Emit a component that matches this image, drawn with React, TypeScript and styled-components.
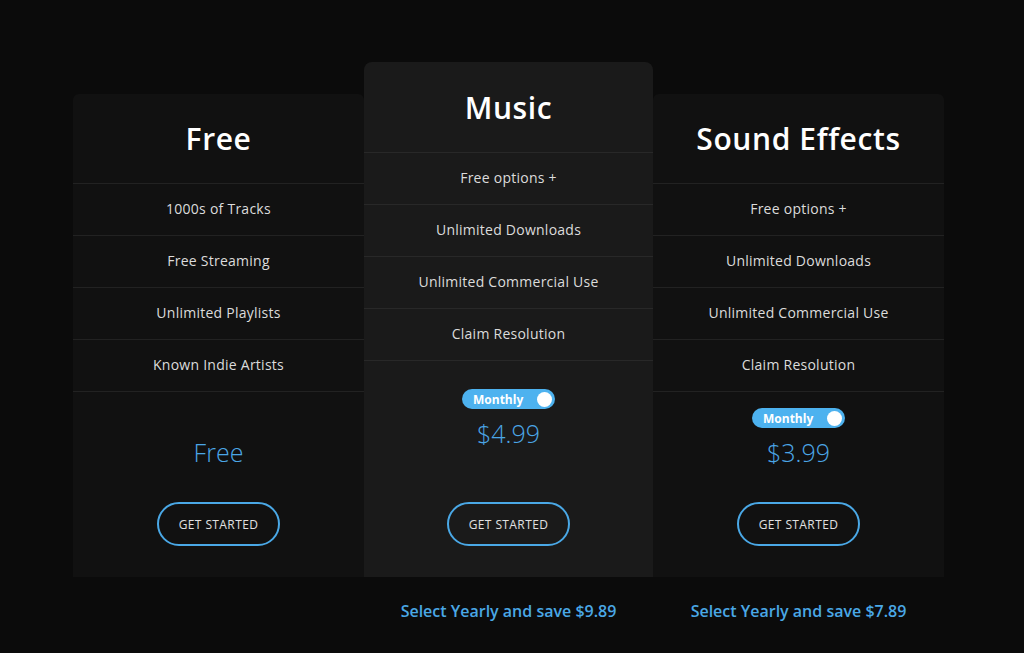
import React from 'react';
import styled, {createGlobalStyle} from 'styled-components';

const GlobalStyle = createGlobalStyle`
  html, body {
    margin: 0;
    padding: 0;
    background: #0b0b0b;
  }
  body {
    font-family: "Open Sans", "DejaVu Sans", sans-serif;
    color: #e6e6e6;
  }
`

const Page = styled.div`
  width: 1024px;
  height: 653px;
  padding: 62px 80px 0 73px;
  box-sizing: border-box;
  background: #0b0b0b;`
const Plans = styled.div`
  display: grid;
  grid-template-columns: 291px 289px 291px;
  align-items: end;`
const Card = styled.div<{$featured?: boolean}>`
  display: flex;
  flex-direction: column;
  height: ${p => p.$featured ? 515 : 483}px;
  background: ${p => p.$featured ? '#1a1a1a' : '#111111'};
  border-radius: ${p => p.$featured ? '8px 8px 0 0' : '6px 6px 0 0'};`
const Header = styled.div<{$featured?: boolean}>`
  height: ${p => p.$featured ? 90 : 89}px;
  display: flex;
  align-items: center;
  justify-content: center;`
const Title = styled.h2`
  margin: 0;
  font-weight: 600;
  font-size: 30px;
  letter-spacing: 0.6px;
  color: #fff;`
const Feature = styled.div<{$featured?: boolean}>`
  height: 52px;
  box-sizing: border-box;
  padding-bottom: 2px;
  border-top: 1px solid ${p => p.$featured ? '#282828' : '#222'};
  display: flex;
  align-items: center;
  justify-content: center;
  font-size: 14px;
  letter-spacing: 0.25px;
  color: #dcdcdc;`
const Pricing = styled.div<{$featured?: boolean}>`
  flex: 1;
  border-top: 1px solid ${p => p.$featured ? '#282828' : '#222'};
  display: flex;
  flex-direction: column;
  align-items: center;
  padding: ${p => p.$featured ? 28 : 16}px 0 31px;`
const Toggle = styled.div<{$hidden?: boolean}>`
  visibility: ${p => p.$hidden ? 'hidden' : 'visible'};
  width: 93px;
  height: 20px;
  border-radius: 10px;
  background: #4db2ef;
  display: flex;
  align-items: center;
  justify-content: space-between;
  padding: 0 3px 0 11px;
  box-sizing: border-box;
  font-size: 12px;
  font-weight: 700;
  color: #fff;`
const Knob = styled.span`
  width: 15px;
  height: 15px;
  border-radius: 50%;
  background: #fff;`
const Price = styled.div`
  margin-top: 7px;
  line-height: 34px;
  font-size: 25px;
  font-weight: 300;
  color: #4ba6e6;`
const Button = styled.button`
  margin-top: auto;
  width: 123px;
  height: 44px;
  border: 2px solid #4aa8e6;
  border-radius: 22px;
  background: transparent;
  color: #e0e0e0;
  font-family: inherit;
  font-size: 12px;
  font-weight: 500;
  letter-spacing: 0.4px;
  text-transform: uppercase;
  cursor: pointer;`
const Notes = styled.div`
  display: grid;
  grid-template-columns: 291px 289px 291px;`
const Note = styled.div`
  height: 68px;
  display: flex;
  align-items: center;
  justify-content: center;
  font-size: 16px;
  font-weight: 600;
  color: #4aa8e6;`

type Plan = {
    name: string;
    features: string[];
    price: string;
    monthly: boolean;
    featured?: boolean;
    note?: string;
}

const plans: Plan[] = [
    {name: 'Free', features: ['1000s of Tracks', 'Free Streaming', 'Unlimited Playlists', 'Known Indie Artists'], price: 'Free', monthly: false},
    {name: 'Music', features: ['Free options +', 'Unlimited Downloads', 'Unlimited Commercial Use', 'Claim Resolution'], price: '$4.99', monthly: true, featured: true, note: 'Select Yearly and save $9.89'},
    {name: 'Sound Effects', features: ['Free options +', 'Unlimited Downloads', 'Unlimited Commercial Use', 'Claim Resolution'], price: '$3.99', monthly: true, note: 'Select Yearly and save $7.89'},
]

const App = () => {
    return (
        <>
            <GlobalStyle/>
            <Page>
                <Plans>
                    {plans.map(plan => (
                        <Card key={plan.name} $featured={plan.featured}>
                            <Header $featured={plan.featured}><Title>{plan.name}</Title></Header>
                            {plan.features.map(f => (
                                <Feature key={f} $featured={plan.featured}>{f}</Feature>
                            ))}
                            <Pricing $featured={plan.featured}>
                                <Toggle $hidden={!plan.monthly}>Monthly<Knob/></Toggle>
                                <Price>{plan.price}</Price>
                                <Button type={'button'}>Get started</Button>
                            </Pricing>
                        </Card>
                    ))}
                </Plans>
                <Notes>
                    {plans.map(plan => <Note key={plan.name}>{plan.note}</Note>)}
                </Notes>
            </Page>
        </>
    );
};

export default App;
